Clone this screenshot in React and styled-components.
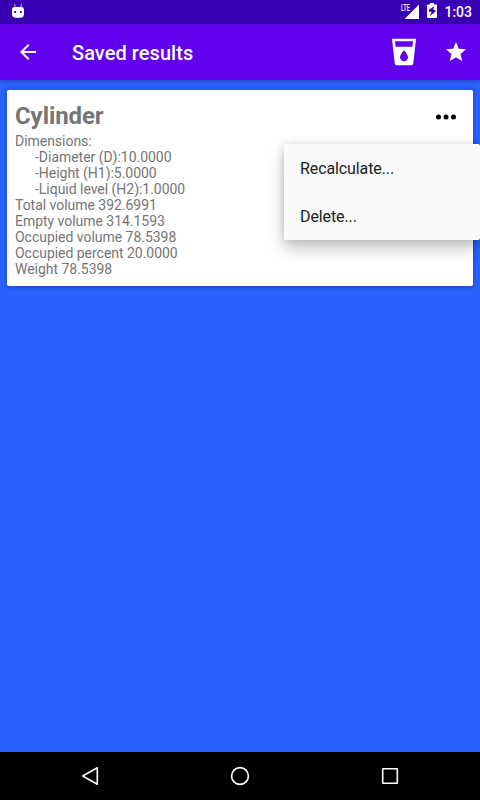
import React from 'react';
import styled, { createGlobalStyle } from 'styled-components';

const dimensions = [
    { label: 'Diameter (D)', value: '10.0000' },
    { label: 'Height (H1)', value: '5.0000' },
    { label: 'Liquid level (H2)', value: '1.0000' },
];

const totals = [
    { label: 'Total volume', value: '392.6991' },
    { label: 'Empty volume', value: '314.1593' },
    { label: 'Occupied volume', value: '78.5398' },
    { label: 'Occupied percent', value: '20.0000' },
    { label: 'Weight', value: '78.5398' },
];

const StatusIcons = () => (
    <StatusGroup>
        <svg width="20" height="24" viewBox="0 0 20 24">
            <path d="M19 4.5V19H4.5L11 12.5V12h.5z" fill="#fff" />
            <text x="1" y="11" fontSize="9.5" fontWeight="500" textLength="9" lengthAdjust="spacingAndGlyphs" fill="#fff">LTE</text>
        </svg>
        <BatteryIcon width="10" height="24" viewBox="0 0 10 24">
            <path
                fill="#fff"
                fillRule="evenodd"
                d="M3 3h4v1.600h2.200c.5 0 .8.3.8.8v11.800c0 .5-.3.8-.8.8H.8c-.5 0-.8-.3-.8-.8V5.400c0-.5.3-.8.8-.8H3zM7.600 6.300L2 9.500v2.300h2.600L3 16l5.300-4.300V9.800H6z"
            />
        </BatteryIcon>
        <Clock>1:03</Clock>
    </StatusGroup>
);

const App = () => {
    return (
        <Screen>
            <GlobalStyle />
            <StatusBar>
                <svg width="12" height="24" viewBox="0 0 12 24" fill="#fff">
                    <path d="M2.500 4l1 4M9.500 4l-1 4" stroke="#fff" strokeWidth="1" opacity=".7" />
                    <path
                        fillRule="evenodd"
                        d="M2.500 7h7C11 7 12 8 12 9.300v5.200c0 2-1.500 3.200-3.500 3.200h-5C1.500 17.700 0 16.500 0 14.500V9.300C0 8 1 7 2.500 7zM2.300 11v2h1.800v-2zM7.900 11v2h1.800v-2z"
                    />
                </svg>
                <StatusIcons />
            </StatusBar>
            <Toolbar>
                <svg width="24" height="24" viewBox="0 0 24 24" fill="#fff">
                    <path d="M20 11H7.830l5.590-5.590L12 4l-8 8 8 8 1.410-1.410L7.830 13H20v-2z" />
                </svg>
                <ToolbarTitle>Saved results</ToolbarTitle>
                <Actions>
                    <svg width="32" height="32" viewBox="0 0 24 24" fill="#fff">
                        <path d="M3 2l2.010 18.230C5.130 21.230 5.970 22 7 22h10c1.030 0 1.870-.77 1.990-1.770L21 2H3zm9 17c-1.660 0-3-1.340-3-3 0-2 3-5.400 3-5.400s3 3.400 3 5.400c0 1.660-1.340 3-3 3zm6.330-11H5.670l-.44-4h13.550l-.45 4z" />
                    </svg>
                    <svg width="24" height="24" viewBox="0 0 24 24" fill="#fff">
                        <path d="M12 17.270L18.180 21l-1.640-7.030L22 9.240l-7.190-.61L12 2 9.190 8.630 2 9.240l5.460 4.730L5.820 21z" />
                    </svg>
                </Actions>
            </Toolbar>
            <Content>
                <Card>
                    <CardHeader>
                        <CardTitle>Cylinder</CardTitle>
                        <MoreButton aria-label="More">
                            <svg width="24" height="24" viewBox="0 0 24 24">
                                <circle cx="4.500" cy="12" r="2.500" />
                                <circle cx="12" cy="12" r="2.500" />
                                <circle cx="19.500" cy="12" r="2.500" />
                            </svg>
                        </MoreButton>
                    </CardHeader>
                    <Line>Dimensions:</Line>
                    {dimensions.map((item) => (
                        <Line key={item.label} $indent>-{item.label}:{item.value}</Line>
                    ))}
                    {totals.map((item) => (
                        <Line key={item.label}>{item.label} {item.value}</Line>
                    ))}
                    <Menu>
                        <MenuItem>Recalculate...</MenuItem>
                        <MenuItem>Delete...</MenuItem>
                    </Menu>
                </Card>
            </Content>
            <NavBar>
                <svg width="24" height="24" viewBox="0 0 24 24">
                    <path d="M19.300 3.800v16.400L4.700 12z" />
                </svg>
                <svg width="24" height="24" viewBox="0 0 24 24">
                    <circle cx="12" cy="12" r="8.400" />
                </svg>
                <svg width="24" height="24" viewBox="0 0 24 24">
                    <rect x="4.700" y="4.700" width="14.600" height="14.600" rx=".5" />
                </svg>
            </NavBar>
        </Screen>
    )
}

export default App;


const GlobalStyle = createGlobalStyle`
    * {
        box-sizing: border-box;
    }
    body {
        margin: 0;
        font-family: Roboto, sans-serif;
    }
    svg {
        display: block;
        flex-shrink: 0;
    }
`;
const Screen = styled.div`
    display: flex;
    flex-direction: column;
    width: 480px;
    height: 800px;
    overflow: hidden;
    background-color: #2962ff;
`;
const StatusBar = styled.div`
    display: flex;
    justify-content: space-between;
    height: 24px;
    flex-shrink: 0;
    padding: 0 8px 0 12px;
    background-color: #3700b3;
`;
const StatusGroup = styled.div`
    display: flex;
    align-items: center;
`;
const BatteryIcon = styled.svg`
    margin: 0 7px;
`;
const Clock = styled.span`
    font-size: 14px;
    font-weight: 500;
    line-height: 24px;
    color: #fff;
`;
const Toolbar = styled.header`
    display: flex;
    align-items: center;
    height: 56px;
    flex-shrink: 0;
    padding: 0 12px 0 16px;
    background-color: #6200ee;
    box-shadow: 0 1px 4px rgba(0, 0, 0, .3);
`;
const ToolbarTitle = styled.h1`
    margin: 2px 0 0 32px;
    font-size: 20px;
    font-weight: 500;
    line-height: 24px;
    letter-spacing: .06px;
    color: #fff;
`;
const Actions = styled.div`
    display: flex;
    align-items: center;
    gap: 24px;
    margin-left: auto;
`;
const Content = styled.main`
    flex: 1;
    padding: 10px 7px;
`;
const Card = styled.article`
    position: relative;
    height: 196px;
    padding: 8px;
    border-radius: 2px;
    background-color: #fff;
    box-shadow: 0 1px 5px rgba(0, 0, 0, .35);
`;
const CardHeader = styled.div`
    display: flex;
    justify-content: space-between;
    align-items: center;
    height: 35px;
    padding-right: 7px;
`;
const CardTitle = styled.h2`
    margin: 2px 0 0;
    font-size: 24px;
    font-weight: 700;
    line-height: 35px;
    letter-spacing: -.08px;
    color: #757575;
`;
const MoreButton = styled.button`
    padding: 3px 0 0;
    border: 0;
    background: none;
`;
const Line = styled.div`
    padding-left: ${({ $indent }) => ($indent ? '20px' : '0')};
    font-size: 14px;
    line-height: 16px;
    letter-spacing: -.03px;
    color: #757575;
`;
const Menu = styled.div`
    position: absolute;
    top: 54px;
    left: 277px;
    width: 196px;
    border-radius: 2px;
    background-color: #fafafa;
    box-shadow: 0 8px 16px rgba(0, 0, 0, .24), 0 0 8px rgba(0, 0, 0, .12);
`;
const MenuItem = styled.div`
    height: 48px;
    padding: 0 16px;
    font-size: 16px;
    line-height: 49px;
    letter-spacing: -.1px;
    color: #212121;
`;
const NavBar = styled.nav`
    display: flex;
    align-items: center;
    justify-content: space-between;
    height: 48px;
    flex-shrink: 0;
    padding: 0 78px;
    background-color: #000;

    svg {
        fill: none;
        stroke: #fff;
        stroke-width: 1.6;
        stroke-linejoin: round;
    }
`;
